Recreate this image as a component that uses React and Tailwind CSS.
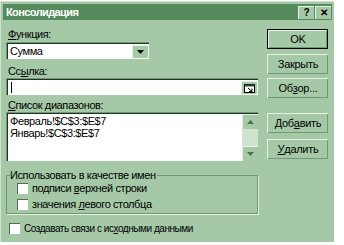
const font = { fontFamily: '"Liberation Sans", Arial, sans-serif' }

function Btn({ children, primary, className = "" }) {
  return (
    <div className={(primary ? "border border-black " : "") + className}>
      <div className={"flex items-center justify-center bg-[#a5c9a7] border-t border-l border-[#e4f1e5] border-r-[#2f4f33] border-b-[#2f4f33] shadow-[inset_-1px_-1px_0_#6f9874] text-[11px] tracking-[-0.3px] text-black " + (primary ? "h-[18px]" : "h-[20px]")}>
        {children}
      </div>
    </div>
  )
}

function Sunken({ className, children }) {
  return (
    <div className={"border-t border-l border-[#6f9874] border-r-[#e4f1e5] border-b-[#e4f1e5] " + className}>
      <div className="border-t border-l border-[#1e3522] border-r-[#a5c9a7] border-b-[#a5c9a7] h-full bg-white">
        {children}
      </div>
    </div>
  )
}

function SmallBtn({ children, className }) {
  return (
    <div className={"w-[16px] flex items-center justify-center bg-[#a5c9a7] border-t border-l border-[#e4f1e5] border-r-[#2f4f33] border-b-[#2f4f33] " + className}>
      {children}
    </div>
  )
}

function Check({ children, className = "text-[11px]" }) {
  return (
    <div className={"flex items-center gap-[4px] leading-[13px] text-black " + className}>
      <div className="w-[11px] h-[11px] bg-white border-t border-l border-[#4d6f51] border-r-[#e4f1e5] border-b-[#e4f1e5]"></div>
      <span>{children}</span>
    </div>
  )
}

export default function App() {
  return (
    <div className="w-[344px] h-[245px] bg-white flex flex-col pt-[1px] overflow-hidden" style={font}>
      <div className="w-[334px] h-[241px] bg-[#a5c9a7] border-t border-l border-[#cfe3d0] border-r-[#1e3522] border-b-[#1e3522] px-[2px] pt-[2px] flex flex-col">
        <div className="h-[16px] shrink-0 bg-[#568b5d] flex items-center justify-between pl-[3px] pr-[1px]">
          <span className="text-white font-bold text-[11px] tracking-[-0.6px]">Консолидация</span>
          <div className="flex gap-[1px]">
            <SmallBtn className="h-[13px] w-[13px] text-[10px] font-bold leading-none">?</SmallBtn>
            <SmallBtn className="h-[13px] w-[13px] text-[10px] font-bold leading-none">✕</SmallBtn>
          </div>
        </div>

        <div className="flex flex-1 pl-[3px] gap-[9px] text-[11px] tracking-[-0.4px] text-black">
          <div className="w-[252px] flex flex-col">
            <div className="mt-[8px] leading-[13px] pl-[2px]"><u>Ф</u>ункция:</div>
            <Sunken className="w-[143px] h-[17px] mt-[1px]">
              <div className="flex h-full items-center justify-between pl-[2px] pr-px">
                <span>Сумма</span>
                <SmallBtn className="h-[13px] w-[14px]">
                  <svg width="7" height="4" viewBox="0 0 7 4"><path d="M0 0h7L3.5 4z" fill="#000" /></svg>
                </SmallBtn>
              </div>
            </Sunken>
            <div className="mt-[6px] leading-[13px] pl-[2px]">Сс<u>ы</u>лка:</div>
            <Sunken className="h-[17px]">
              <div className="flex h-full items-center justify-between pl-[3px] pr-px">
                <div className="w-px h-[11px] bg-black"></div>
                <SmallBtn className="h-[13px] w-[15px]">
                  <svg width="11" height="9" viewBox="0 0 11 9">
                    <rect x="0.5" y="0.5" width="10" height="8" fill="#fff" stroke="#000" />
                    <rect x="0.5" y="0.5" width="10" height="2" fill="#2f4f33" />
                    <path d="M4 4l4 3.5M8 4.5v3H5" stroke="#000" fill="none" />
                  </svg>
                </SmallBtn>
              </div>
            </Sunken>
            <div className="mt-[4px] leading-[13px] pl-[2px]"><u>С</u>писок диапазонов:</div>
            <Sunken className="h-[49px]">
              <div className="flex h-full">
                <div className="flex-1 pl-[2px] pt-[1px] leading-[12px]">
                  <div>Февраль!$C$3:$E$7</div>
                  <div>Январь!$C$3:$E$7</div>
                </div>
                <div className="w-[16px] flex flex-col justify-between bg-[#cfe3d0]">
                  <SmallBtn className="h-[15px]">
                    <svg width="7" height="4" viewBox="0 0 7 4"><path d="M0 4h7L3.5 0z" fill="#4d6f51" /></svg>
                  </SmallBtn>
                  <SmallBtn className="h-[15px]">
                    <svg width="7" height="4" viewBox="0 0 7 4"><path d="M0 0h7L3.5 4z" fill="#4d6f51" /></svg>
                  </SmallBtn>
                </div>
              </div>
            </Sunken>
            <div className="relative mt-[14px] w-[252px] h-[39px] border border-[#6f9874] shadow-[1px_1px_0_#e4f1e5] flex flex-col gap-[3px] pl-[10px] pt-[6px]">
              <span className="absolute -top-[7px] left-[3px] bg-[#a5c9a7] leading-[13px] pr-px">Использовать в качестве имен</span>
              <Check>подписи <u>в</u>ерхней строки</Check>
              <Check>значения <u>л</u>евого столбца</Check>
            </div>
            <div className="mt-[8px] pl-[3px]">
              <Check className="text-[10px] tracking-[-0.45px]">Создавать связи с ис<u>х</u>одными данными</Check>
            </div>
          </div>

          <div className="w-[61px] flex flex-col">
            <Btn primary className="mt-[9px]">OK</Btn>
            <Btn className="mt-[5px]">Закрыть</Btn>
            <Btn className="mt-[4px]">Об<u>з</u>ор...</Btn>
            <Btn className="mt-[15px]">Доб<u>а</u>вить</Btn>
            <Btn className="mt-[6px]"><u>У</u>далить</Btn>
          </div>
        </div>
      </div>
    </div>
  )
}
